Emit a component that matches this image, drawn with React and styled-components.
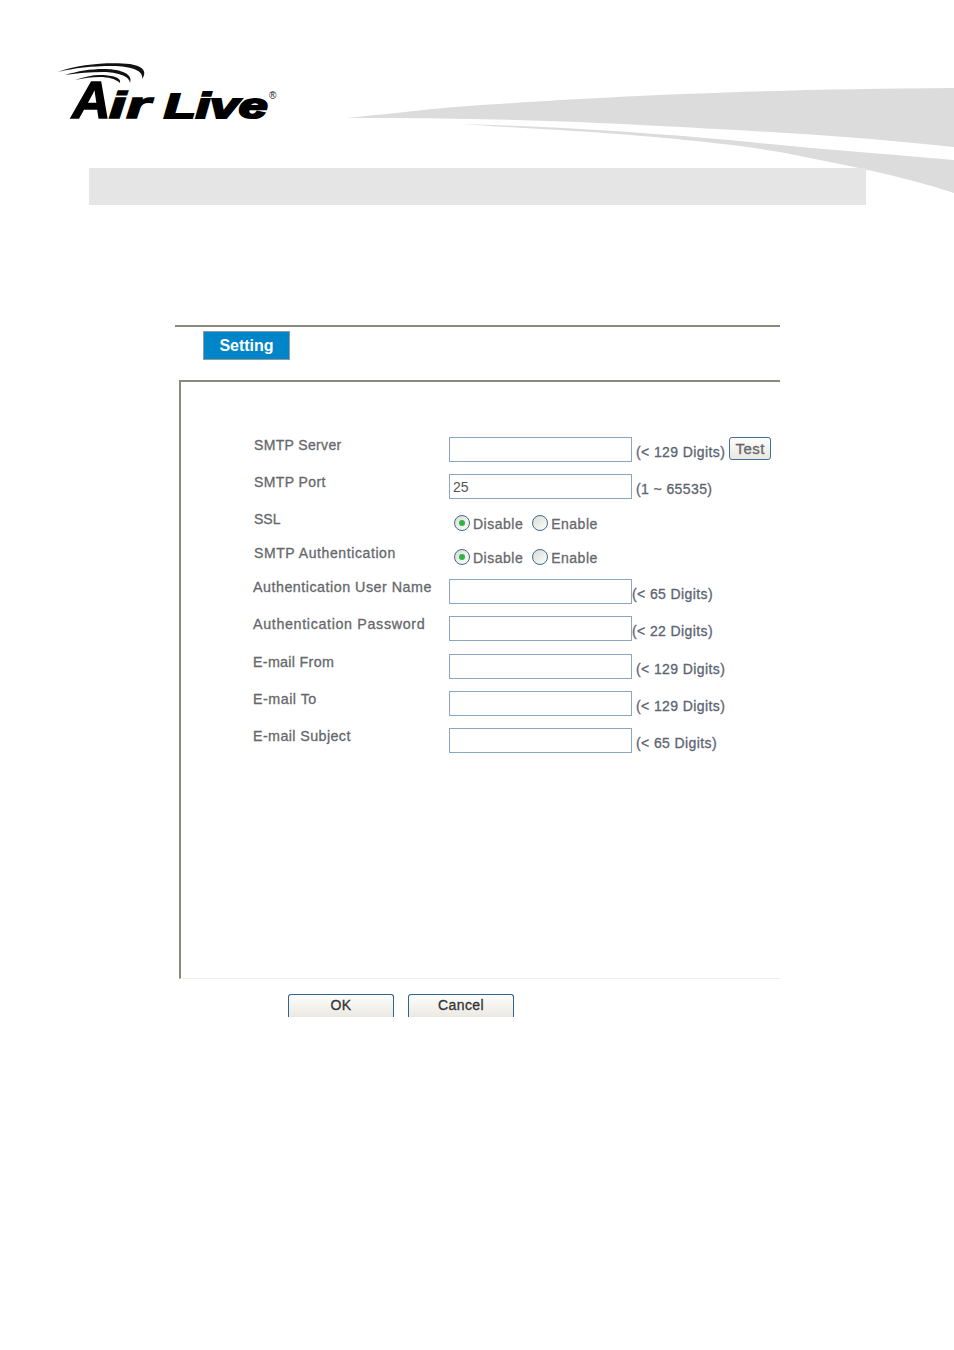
import React from "react";
import styled, { createGlobalStyle } from "styled-components";

const GlobalStyle = createGlobalStyle`
  html, body {
    margin: 0;
    padding: 0;
    background: #fff;
  }
  * {
    box-sizing: border-box;
  }
`;

const Page = styled.div`
  position: relative;
  width: 954px;
  height: 1350px;
  overflow: hidden;
  background: #fff;
  font: 400 14px/16px "Liberation Sans", Arial, sans-serif;
  color: #66686c;
`;

const Header = styled.header`
  height: 168px;
  padding: 58px 0 0 54px;
`;

const LogoMark = styled.svg`
  display: block;
  overflow: visible;
`;

const Swoosh = styled.svg`
  position: absolute;
  top: 80px;
  left: 340px;
`;

const Band = styled.div`
  position: relative;
  width: 777px;
  height: 37px;
  margin-left: 89px;
  background: #e5e5e5;
`;

const Panel = styled.section`
  width: 605px;
  margin: 120px 0 0 175px;
  border-top: 2px solid #8b897b;
`;

const Tab = styled.div`
  width: 87px;
  height: 29px;
  margin: 4px 0 20px 28px;
  border: 1px solid #8f9aa3;
  background: #0085c8;
  color: #fff;
  font-weight: 700;
  font-size: 16px;
  line-height: 27px;
  text-align: center;
`;

const Box = styled.div`
  height: 599px;
  margin-left: 4px;
  padding-top: 55px;
  border-top: 2px solid #8b897b;
  border-left: 2px solid #8b897b;
  border-bottom: 1px solid #eeeeea;
`;

const Row = styled.div`
  display: grid;
  grid-template-columns: ${(p) => (p.$narrow ? 196 : 195)}px 183px auto;
  height: ${(p) => p.$height || 37}px;
  padding-left: ${(p) => (p.$narrow ? 72 : 73)}px;
`;

const Label = styled.div`
  white-space: nowrap;
  font-size: ${(p) => (p.$narrow ? 14.3 : 14)}px;
  letter-spacing: ${(p) => p.$spacing ?? 0.5}px;
  -webkit-text-stroke: 0.3px #66686c;
`;

const TextInput = styled.input`
  width: 183px;
  height: 25px;
  margin: 0;
  padding: 1px 3px;
  border: 1px solid #8aa6c1;
  border-radius: 0;
  background: #fff;
  color: #555;
  font: 400 14px "Liberation Sans", Arial, sans-serif;
  outline: none;
`;

const Note = styled.div`
  display: flex;
  align-items: flex-start;
  gap: 4px;
  padding: 7px 0 0 ${(p) => (p.$tight ? 0 : 4)}px;
  color: #5c6470;
  letter-spacing: 0.4px;
  white-space: nowrap;
  -webkit-text-stroke: 0.3px #5c6470;
`;

const TestButton = styled.button`
  width: 42px;
  height: 23px;
  margin: -7px 0 0 0;
  padding: 0;
  border: 1px solid #3f6e96;
  border-radius: 3px;
  background: linear-gradient(#fdfdfb, #e9e7de);
  color: #66686c;
  letter-spacing: 0.5px;
  font: 400 15px/19px "Liberation Sans", Arial, sans-serif;
`;

const RadioGroup = styled.div`
  display: flex;
  align-items: center;
  height: 16px;
  margin-top: 5px;
  padding-left: 5px;
  grid-column: 2 / 4;
`;

const RadioText = styled.label`
  display: flex;
  align-items: center;
  gap: 3px;
  margin-right: 9px;
  color: #66686c;
  letter-spacing: 0.5px;
  -webkit-text-stroke: 0.3px #66686c;
`;

const Radio = styled.input`
  appearance: none;
  position: relative;
  width: 16px;
  height: 16px;
  margin: -2px 0 0;
  border: 1.5px solid #3d6a8f;
  border-radius: 50%;
  background: linear-gradient(135deg, #dcdcd6, #fdfdfb);

  &:checked::before {
    content: "";
    position: absolute;
    top: 3.5px;
    left: 3.5px;
    width: 6px;
    height: 6px;
    border-radius: 50%;
    background: #2fb344;
  }
`;

const Actions = styled.div`
  display: flex;
  gap: 14px;
  margin: 15px 0 0 113px;
`;

const ActionButton = styled.button`
  width: 106px;
  height: 23px;
  padding: 0 0 2px;
  border: 1px solid #2f6390;
  border-bottom: 0;
  border-radius: 3px 3px 0 0;
  background: linear-gradient(#fdfdfb, #ebe9e2);
  color: #333;
  letter-spacing: 0.4px;
  font: 400 14px/18px "Liberation Sans", Arial, sans-serif;
  -webkit-text-stroke: 0.3px #333;
`;

const LogoText = styled.text`
  font-family: "Liberation Sans", Arial, sans-serif;
  font-weight: 700;
  font-style: italic;
  fill: #000;
  stroke: #000;
`;

const Logo = () => (
  <LogoMark width="226" height="68" viewBox="0 0 226 68" fill="none">
    <path d="M4 14C25 6 55 4 76 6C88 8 94 13 88 21C90 13 78 8 58 8C38 8 20 10 4 14Z" fill="#111" />
    <path d="M11 17C24 13 36 11 50 11C62 11 80 14 76 25C76 18 62 14 50 14C36 14 24 15 11 17Z" fill="#111" />
    <path d="M21 22C30 19 38 17 46 17C56 17 68 19 66 25C62 21 54 19 46 19C38 19 30 20 21 22Z" fill="#111" />
    <LogoText transform="translate(18 60) scale(1.03 1)" fontSize="52" strokeWidth="1.4">
      A
    </LogoText>
    <LogoText transform="translate(55 60) scale(1.72 1)" fontSize="36" strokeWidth="1.5">
      ir
    </LogoText>
    <LogoText transform="translate(110 60) scale(1.44 1)" fontSize="36" strokeWidth="2.2">
      Live
    </LogoText>
    <text x="215" y="41" fontFamily="Liberation Sans" fontSize="10" fill="#111">
      ®
    </text>
  </LogoMark>
);

const fields = [
  { label: "Authentication User Name", note: "(< 65 Digits)", tight: true },
  { label: "Authentication Password", note: "(< 22 Digits)", tight: true, height: 38, spacing: 0.65 },
  { label: "E-mail From", note: "(< 129 Digits)", spacing: 0.3 },
  { label: "E-mail To", note: "(< 129 Digits)" },
  { label: "E-mail Subject", note: "(< 65 Digits)", spacing: 0.4 },
];

const RadioPair = ({ name }) => (
  <RadioGroup>
    <RadioText>
      <Radio type="radio" name={name} defaultChecked />
      Disable
    </RadioText>
    <RadioText>
      <Radio type="radio" name={name} />
      Enable
    </RadioText>
  </RadioGroup>
);

const App = () => {
  return (
    <Page>
      <GlobalStyle />
      <Swoosh width="614" height="130" viewBox="0 0 614 130">
        <path
          d="M7 38C60 33 100 27 160 24C260 17 420 9 614 8L614 67C500 55 400 50 260 43C180 39 90 38 7 38Z"
          fill="#dcdcdc"
        />
        <path
          d="M120 44C230 47 340 55 430 64C500 71 560 75 614 80L614 113C560 95 500 84 440 72C380 62 300 55 220 50C180 48 150 46 120 44Z"
          fill="#dcdcdc"
        />
      </Swoosh>
      <Header>
        <Logo />
      </Header>
      <Band />
      <Panel>
        <Tab>Setting</Tab>
        <Box>
          <Row>
            <Label $spacing={0.35}>SMTP Server</Label>
            <TextInput />
            <Note>
              (&lt; 129 Digits)
              <TestButton>Test</TestButton>
            </Note>
          </Row>
          <Row>
            <Label $spacing={0.4}>SMTP Port</Label>
            <TextInput defaultValue="25" />
            <Note>(1 ~ 65535)</Note>
          </Row>
          <Row $height={34}>
            <Label $spacing={0}>SSL</Label>
            <RadioPair name="ssl" />
          </Row>
          <Row $height={34}>
            <Label $spacing={0.6}>SMTP Authentication</Label>
            <RadioPair name="auth" />
          </Row>
          {fields.map((field) => (
            <Row key={field.label} $narrow $height={field.height}>
              <Label $narrow $spacing={field.spacing}>
                {field.label}
              </Label>
              <TextInput />
              <Note $tight={field.tight}>{field.note}</Note>
            </Row>
          ))}
        </Box>
        <Actions>
          <ActionButton>OK</ActionButton>
          <ActionButton>Cancel</ActionButton>
        </Actions>
      </Panel>
    </Page>
  );
};

export default App;
